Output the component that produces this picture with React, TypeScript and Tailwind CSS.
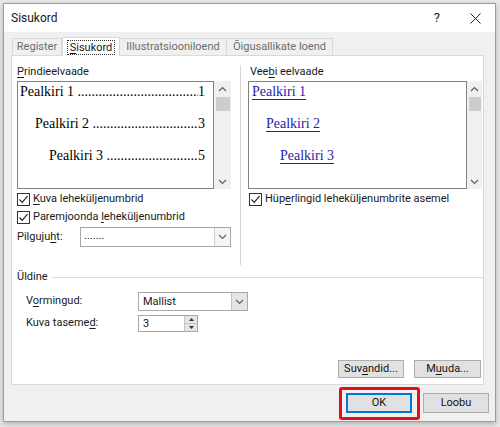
import React from "react";

const ui = "font-['Roboto','Liberation_Sans',sans-serif]";

function Chevron({ dir = "down", className = "" }: { dir?: "up" | "down"; className?: string }) {
  return (
    <svg width="9" height="6" viewBox="0 0 9 6" className={className}>
      <polyline
        points={dir === "up" ? "1,5 4.5,1.5 8,5" : "1,1 4.5,4.5 8,1"}
        fill="none"
        stroke="#606060"
        strokeWidth="1.2"
      />
    </svg>
  );
}

function Check({ checked = true }: { checked?: boolean }) {
  return (
    <div className="w-[13px] h-[13px] border border-[#333] bg-white flex items-center justify-center shrink-0">
      {checked && (
        <svg width="11" height="11" viewBox="0 0 11 11">
          <polyline points="1.5,5.5 4.2,8.3 9.5,2.2" fill="none" stroke="#222" strokeWidth="1.2" />
        </svg>
      )}
    </div>
  );
}

function Scrollbar({ w }: { w: string }) {
  return (
    <div className={`${w} h-full bg-[#f0f0f0] flex flex-col items-center`}>
      <div className="h-[15px] flex items-center justify-center">
        <Chevron dir="up" />
      </div>
      <div className="w-[calc(100%-3px)] h-[14px] bg-[#cdcdcd] mt-px" />
      <div className="flex-1" />
      <div className="h-[15px] flex items-center justify-center">
        <Chevron dir="down" />
      </div>
    </div>
  );
}

function Key({ children }: { children: React.ReactNode }) {
  return <span className="underline underline-offset-2">{children}</span>;
}

function Btn({ w, children, primary = false }: { w: string; children: React.ReactNode; primary?: boolean }) {
  return (
    <div
      className={`${w} h-full flex items-center justify-center bg-[#e1e1e1] text-[11px] text-[#111] ${
        primary ? "border border-[#0078d7] shadow-[inset_0_0_0_1px_#0078d7]" : "border border-[#adadad]"
      }`}
    >
      {children}
    </div>
  );
}

const tocRows = [
  { label: "Pealkiri 1", page: "1", indent: "pl-[2px]", dots: 35 },
  { label: "Pealkiri 2", page: "3", indent: "pl-[17px]", dots: 31 },
  { label: "Pealkiri 3", page: "5", indent: "pl-[31px]", dots: 27 },
];

const webRows = [
  { label: "Pealkiri 1", indent: "pl-[3px]" },
  { label: "Pealkiri 2", indent: "pl-[17px]" },
  { label: "Pealkiri 3", indent: "pl-[31px]" },
];

export default function App() {
  return (
    <div className={`${ui} relative w-[500px] h-[427px] overflow-hidden bg-[#e9e9e9] pl-[3px] pt-[3px] text-[#1a1a1a]`}>
      <div className="w-[493px] h-[419px] border border-[#9c9c9c] bg-[#f0f0f0] flex flex-col shadow-[0_2px_6px_rgba(0,0,0,0.25)]">
        {/* title bar */}
        <div className="h-[28px] bg-white flex items-center pl-[7px] pr-[14px] shrink-0">
          <span className="text-[12px]">Sisukord</span>
          <span className="ml-auto text-[13px] text-[#222] mr-[30px]">?</span>
          <svg width="11" height="11" viewBox="0 0 11 11">
            <path d="M0.5 0.5 L10.5 10.5 M10.5 0.5 L0.5 10.5" stroke="#222" strokeWidth="1" />
          </svg>
        </div>

        {/* tabs */}
        <div className="pl-[8px] pt-[5px] flex items-end h-[23px] shrink-0 text-[11px]">
          <div className="w-[50px] h-[17px] border border-b-0 border-[#d9d9d9] flex items-center justify-center text-[#6d6d6d]">
            Register
          </div>
          <div className="w-[58px] h-[19px] border border-b-0 border-[#d9d9d9] bg-white flex items-center justify-center -mb-px relative z-10">
            <span className="border border-dotted border-[#333] px-[2px] leading-[13px]">
              <Key>S</Key>isukord
            </span>
          </div>
          <div className="w-[107px] h-[17px] border border-b-0 border-l-0 border-[#d9d9d9] flex items-center justify-center text-[#6d6d6d]">
            Illustratsiooniloend
          </div>
          <div className="w-[106px] h-[17px] border border-b-0 border-l-0 border-[#d9d9d9] flex items-center justify-center text-[#6d6d6d]">
            Õigusallikate loend
          </div>
        </div>

        {/* panel */}
        <div className="ml-[7px] w-[473px] h-[330px] border border-[#d9d9d9] bg-white flex flex-col shrink-0 text-[11px]">
          <div className="flex pl-[5px] pt-[9px] h-[209px] shrink-0">
            {/* left column */}
            <div className="w-[214px] flex flex-col">
              <div className="h-[14px] leading-[14px]">
                <Key>P</Key>rindieelvaade
              </div>
              <div className="mt-[2px] h-[108px] flex">
                <div className="w-[197px] h-full border border-[#828282] font-['Liberation_Serif',serif] text-[14px] text-black flex flex-col gap-[12px] pr-[8px]">
                  {tocRows.map((r) => (
                    <div key={r.label} className={`${r.indent} h-[20px] leading-[20px] flex whitespace-nowrap`}>
                      <span>{r.label}&nbsp;</span>
                      <span className="flex-1 min-w-0 overflow-hidden text-left">{".".repeat(r.dots)}</span>
                      <span>{r.page}</span>
                    </div>
                  ))}
                </div>
                <Scrollbar w="w-[17px]" />
              </div>
              <div className="mt-[4px] h-[13px] flex items-center gap-[3px]">
                <Check />
                <span>
                  <Key>K</Key>uva leheküljenumbrid
                </span>
              </div>
              <div className="mt-[5px] h-[13px] flex items-center gap-[3px]">
                <Check />
                <span>
                  Paremjoonda <Key>l</Key>eheküljenumbrid
                </span>
              </div>
              <div className="mt-[3px] h-[20px] flex items-center">
                <span className="w-[63px]">
                  Pilguju<Key>h</Key>t:
                </span>
                <div className="w-[151px] h-full border border-[#a8a8a8] flex">
                  <span className="flex-1 pl-[3px] leading-[16px]">.......</span>
                  <div className="w-[16px] h-full border-l border-[#d0d0d0] bg-[#f5f5f5] flex items-center justify-center">
                    <Chevron />
                  </div>
                </div>
              </div>
            </div>

            {/* separator */}
            <div className="ml-[9px] w-px h-[200px] bg-[#d6d6d6]" />

            {/* right column */}
            <div className="ml-[7px] w-[234px] flex flex-col">
              <div className="h-[14px] leading-[14px] pl-[2px]">
                Vee<Key>b</Key>i eelvaade
              </div>
              <div className="mt-[2px] h-[108px] flex">
                <div className="w-[219px] h-full border border-[#828282] font-['Liberation_Serif',serif] text-[14px] text-[#2323a8] flex flex-col gap-[12px]">
                  {webRows.map((r) => (
                    <div key={r.label} className={`${r.indent} h-[20px] leading-[20px]`}>
                      <span className="underline underline-offset-[3px]">{r.label}</span>
                    </div>
                  ))}
                </div>
                <Scrollbar w="w-[15px]" />
              </div>
              <div className="mt-[4px] h-[13px] pl-[1px] flex items-center gap-[3px]">
                <Check />
                <span>
                  Hüp<Key>e</Key>rlingid leheküljenumbrite asemel
                </span>
              </div>
            </div>
          </div>

          {/* Üldine */}
          <div className="mt-[5px] h-[14px] pl-[5px] flex items-center gap-[4px]">
            <span className="leading-[14px]">Üldine</span>
            <div className="flex-1 h-px bg-[#dcdcdc]" />
          </div>
          <div className="mt-[8px] h-[19px] pl-[14px] flex items-center">
            <span className="w-[112px]">
              V<Key>o</Key>rmingud:
            </span>
            <div className="w-[110px] h-full border border-[#a8a8a8] flex">
              <span className="flex-1 pl-[4px] leading-[17px]">Mallist</span>
              <div className="w-[16px] h-full border-l border-[#c4c4c4] bg-[#e5e5e5] flex items-center justify-center">
                <Chevron />
              </div>
            </div>
          </div>
          <div className="mt-[4px] h-[17px] pl-[14px] flex items-center">
            <span className="w-[112px]">
              Kuva taseme<Key>d</Key>:
            </span>
            <div className="w-[60px] h-full border border-[#a8a8a8] flex">
              <span className="flex-1 pl-[4px] leading-[15px]">3</span>
              <div className="w-[13px] h-full flex flex-col border-l border-[#c4c4c4]">
                <div className="flex-1 bg-[#e5e5e5] border-b border-[#c4c4c4] flex items-center justify-center">
                  <svg width="5" height="3" viewBox="0 0 5 3">
                    <polygon points="0,3 2.5,0 5,3" fill="#333" />
                  </svg>
                </div>
                <div className="flex-1 bg-[#e5e5e5] flex items-center justify-center">
                  <svg width="5" height="3" viewBox="0 0 5 3">
                    <polygon points="0,0 2.5,3 5,0" fill="#333" />
                  </svg>
                </div>
              </div>
            </div>
          </div>

          <div className="mt-auto mb-[6px] h-[18px] pr-[2px] flex justify-end gap-[10px]">
            <Btn w="w-[66px]">
              Suv<Key>a</Key>ndid...
            </Btn>
            <Btn w="w-[67px]">
              M<Key>u</Key>uda...
            </Btn>
          </div>
        </div>

        {/* bottom buttons */}
        <div className="mt-[8px] h-[20px] pr-[6px] flex justify-end gap-[11px] text-[11px]">
          <Btn w="w-[66px]" primary>
            OK
          </Btn>
          <Btn w="w-[66px]">Loobu</Btn>
        </div>
      </div>

      {/* annotation highlight */}
      <div className="absolute left-[339px] top-[387px] w-[81px] h-[33px] border-[3px] border-[#e3101c] rounded-[3px]" />
    </div>
  );
}
